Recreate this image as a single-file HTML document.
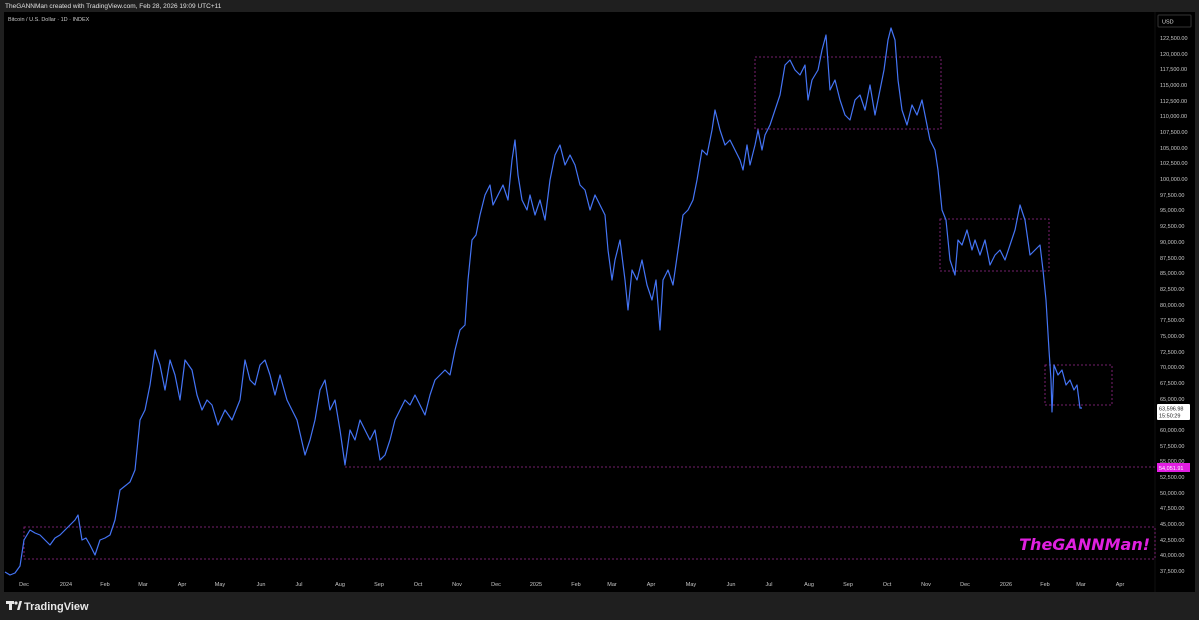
<!DOCTYPE html>
<html><head><meta charset="utf-8"><style>
body{margin:0;width:1199px;height:620px;background:#1f1f1f;overflow:hidden;font-family:"Liberation Sans",sans-serif;position:relative}
.t{position:absolute;color:#d0d0d0;font-size:6px;white-space:nowrap}
</style></head><body>
<div class="t" style="left:5px;top:3px;font-size:6.5px;color:#e0e0e0">TheGANNMan created with TradingView.com, Feb 28, 2026 19:09 UTC+11</div>
<svg width="1199" height="620" style="position:absolute;left:0;top:0">
<rect x="4" y="12" width="1191" height="580" fill="#000"/>
<line x1="1155" y1="12" x2="1155" y2="592" stroke="#111"/>
<text x="8" y="21" fill="#c8c8c8" font-size="5.5" font-family="Liberation Sans">Bitcoin / U.S. Dollar · 1D · INDEX</text>
<rect x="1158" y="15" width="33" height="12" fill="#000" stroke="#333" rx="1"/>
<text x="1162" y="23.5" fill="#ddd" font-size="5.5" font-family="Liberation Sans">USD</text>
<g fill="#c8c8c8" font-size="5.5" font-family="Liberation Sans">
<text x="1160" y="40">122,500.00</text><text x="1160" y="56">120,000.00</text><text x="1160" y="71">117,500.00</text><text x="1160" y="87">115,000.00</text><text x="1160" y="103">112,500.00</text><text x="1160" y="118">110,000.00</text><text x="1160" y="134">107,500.00</text><text x="1160" y="150">105,000.00</text><text x="1160" y="165">102,500.00</text><text x="1160" y="181">100,000.00</text><text x="1160" y="197">97,500.00</text><text x="1160" y="212">95,000.00</text><text x="1160" y="228">92,500.00</text><text x="1160" y="244">90,000.00</text><text x="1160" y="260">87,500.00</text><text x="1160" y="275">85,000.00</text><text x="1160" y="291">82,500.00</text><text x="1160" y="307">80,000.00</text><text x="1160" y="322">77,500.00</text><text x="1160" y="338">75,000.00</text><text x="1160" y="354">72,500.00</text><text x="1160" y="369">70,000.00</text><text x="1160" y="385">67,500.00</text><text x="1160" y="401">65,000.00</text><text x="1160" y="432">60,000.00</text><text x="1160" y="448">57,500.00</text><text x="1160" y="463">55,000.00</text><text x="1160" y="479">52,500.00</text><text x="1160" y="495">50,000.00</text><text x="1160" y="510">47,500.00</text><text x="1160" y="526">45,000.00</text><text x="1160" y="542">42,500.00</text><text x="1160" y="557">40,000.00</text><text x="1160" y="573">37,500.00</text>
</g>
<g fill="#c8c8c8" font-size="5.5" font-family="Liberation Sans" text-anchor="middle">
<text x="24" y="586">Dec</text><text x="66" y="586">2024</text><text x="105" y="586">Feb</text><text x="143" y="586">Mar</text><text x="182" y="586">Apr</text><text x="220" y="586">May</text><text x="261" y="586">Jun</text><text x="299" y="586">Jul</text><text x="340" y="586">Aug</text><text x="379" y="586">Sep</text><text x="418" y="586">Oct</text><text x="457" y="586">Nov</text><text x="496" y="586">Dec</text><text x="536" y="586">2025</text><text x="576" y="586">Feb</text><text x="612" y="586">Mar</text><text x="651" y="586">Apr</text><text x="691" y="586">May</text><text x="731" y="586">Jun</text><text x="769" y="586">Jul</text><text x="809" y="586">Aug</text><text x="848" y="586">Sep</text><text x="887" y="586">Oct</text><text x="926" y="586">Nov</text><text x="965" y="586">Dec</text><text x="1006" y="586">2026</text><text x="1045" y="586">Feb</text><text x="1081" y="586">Mar</text><text x="1120" y="586">Apr</text>
</g>
<g fill="none" stroke="#9a2a8e" stroke-width="0.8" stroke-dasharray="2,2">
<rect x="755" y="57" width="186" height="72"/>
<rect x="940" y="219" width="109" height="52"/>
<rect x="1045" y="365" width="67" height="40"/>
<line x1="345" y1="467" x2="1155" y2="467"/>
<rect x="24" y="527" width="1131" height="32"/>
</g>
<polyline fill="none" stroke="#4474f5" stroke-width="1.2" stroke-linejoin="round" points="5,572 10,575 15,573 20,566 24,540 30,530 35,533 40,535 45,540 50,545 55,538 60,535 65,530 70,525 75,520 78,515 82,540 86,538 90,545 95,555 100,540 105,538 110,535 115,520 120,490 125,486 130,482 135,470 138,440 140,420 145,410 150,385 155,350 160,365 165,390 170,360 175,375 180,400 185,360 192,370 197,395 202,410 207,400 212,405 218,425 225,410 232,420 240,400 245,360 250,380 255,385 260,365 265,360 270,375 275,395 280,375 287,400 292,410 297,420 305,455 310,440 315,420 320,390 325,380 330,410 335,400 340,430 345,465 350,430 355,440 360,420 365,430 370,440 375,430 380,460 385,455 390,440 395,420 400,410 405,400 410,405 415,395 420,405 425,415 430,395 435,380 440,375 445,370 450,375 455,350 460,330 465,325 468,280 472,240 476,235 480,215 485,195 490,185 493,205 498,195 503,185 508,200 512,160 515,140 518,175 522,200 527,210 530,195 535,215 540,200 545,220 550,180 555,155 560,145 565,165 570,155 575,165 580,185 585,190 590,210 595,195 600,205 605,215 608,250 612,280 615,260 620,240 625,280 628,310 632,270 637,280 642,260 647,285 652,300 656,280 660,330 663,280 668,270 673,285 678,250 683,215 688,210 693,200 697,180 702,150 707,155 712,130 715,110 720,130 725,145 730,140 735,150 740,160 743,170 747,145 750,165 755,145 758,130 762,150 765,135 770,125 775,110 780,95 785,65 790,60 795,70 800,75 805,65 808,100 812,80 818,70 822,50 826,35 830,90 835,80 840,100 845,115 850,120 855,100 860,95 865,110 870,85 875,115 880,90 884,70 888,40 891,28 895,40 898,80 902,110 907,125 912,105 917,115 922,100 927,125 930,140 935,150 938,170 942,210 946,220 950,260 955,275 958,240 962,245 967,230 972,250 975,240 980,255 985,240 990,265 995,255 1000,250 1005,260 1010,245 1015,230 1020,205 1025,220 1030,255 1035,250 1040,245 1043,270 1046,300 1049,350 1051,380 1052,412 1054,365 1058,375 1062,370 1066,385 1070,380 1074,390 1077,385 1080,408 1082,408"/>
<rect x="1157" y="404" width="33" height="16" fill="#fff" rx="1"/>
<text x="1159" y="410.5" fill="#222" font-size="5.5" font-family="Liberation Sans">63,596.98</text>
<text x="1159" y="417.5" fill="#222" font-size="5.5" font-family="Liberation Sans">15:50:29</text>
<rect x="1157" y="463" width="33" height="9" fill="#e21ee2"/>
<text x="1159" y="470" fill="#fff" font-size="5.5" font-family="Liberation Sans">54,051.91</text>
<text x="1150" y="550" text-anchor="end" fill="#e020e0" font-size="16" font-style="italic" font-weight="600" font-family="DejaVu Sans">TheGANNMan!</text>
<g fill="#e8e8e8"><rect x="6" y="601" width="8" height="3"/><rect x="9" y="601" width="3" height="9"/><circle cx="16" cy="603" r="1.6"/><polygon points="17,610 19.5,601 22,601 19.5,610"/></g>
<text x="24" y="610" fill="#e8e8e8" font-size="11" font-weight="bold" font-family="Liberation Sans">TradingView</text>
</svg>
</body></html>
